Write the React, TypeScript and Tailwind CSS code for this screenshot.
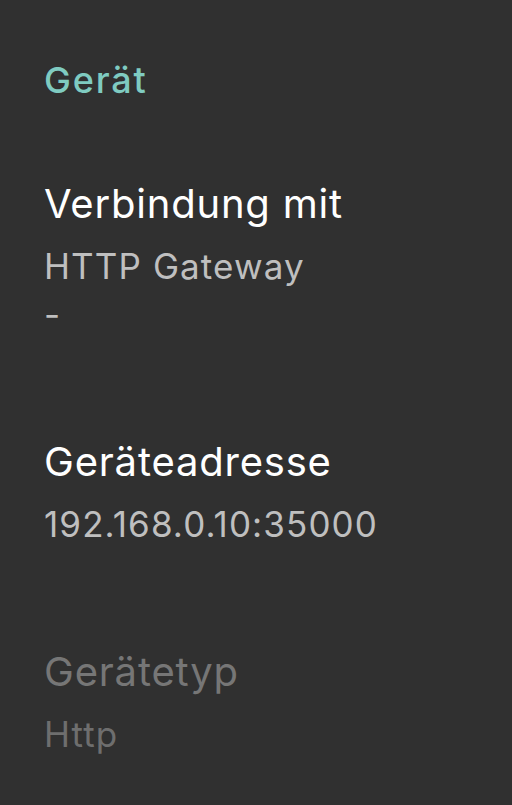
const font = { fontFamily: "Inter, Roboto, sans-serif" };

type Pref = { title: string; lines: string[]; disabled?: boolean };

const prefs: Pref[] = [
  { title: "Verbindung mit", lines: ["HTTP Gateway", "-"] },
  { title: "Geräteadresse", lines: ["192.168.0.10:35000"] },
  { title: "Gerätetyp", lines: ["Http"], disabled: true },
];

const PrefItem = ({ item }: { item: Pref }) => (
  <div className="flex flex-col">
    <div
      className={`text-[40px] leading-[52px] tracking-[0.8px] ${
        item.disabled ? "text-[#767676]" : "text-white"
      }`}
    >
      {item.title}
    </div>
    <div className="mt-[12px] flex flex-col">
      {item.lines.map((line, i) => (
        <div
          key={i}
          className={`text-[35px] leading-[48px] tracking-[1.1px] ${
            item.disabled ? "text-[#6e6e6e]" : "text-[#bfbfbf]"
          }`}
        >
          {line}
        </div>
      ))}
    </div>
  </div>
);

export default function App() {
  return (
    <div
      className="w-[512px] h-[805px] overflow-hidden bg-[#303030] pl-[44px] pt-[56px]"
      style={font}
    >
      <div className="text-[36px] leading-[48px] tracking-[1.8px] font-medium text-[#7fcbc1]">
        Gerät
      </div>
      <div className="mt-[74px] flex flex-col gap-[98px]">
        {prefs.map((p) => (
          <PrefItem key={p.title} item={p} />
        ))}
      </div>
    </div>
  );
}
